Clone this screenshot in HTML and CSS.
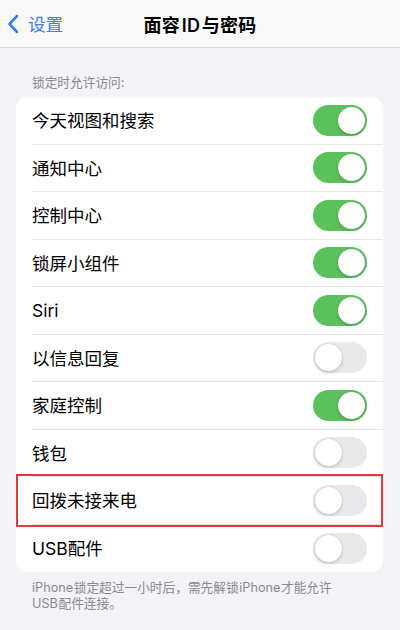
FILE: index.html
```html
<!DOCTYPE html>
<html lang="zh-CN">
<head>
<meta charset="utf-8">
<title>面容ID与密码</title>
<link rel="stylesheet" href="styles.css">
</head>
<body>
<div class="screen">
  <header class="navbar">
    <div class="back">
      <svg class="chevron" width="12" height="20" viewBox="0 0 12 20"><path d="M10 2 L2.5 10 L10 18" fill="none" stroke="#3a7ff2" stroke-width="2.6" stroke-linecap="round" stroke-linejoin="round"/></svg>
      <span>设置</span>
    </div>
    <h1 class="title">面容 ID 与密码</h1>
  </header>

  <div class="section-label">锁定时允许访问:</div>

  <div class="card">
    <div class="row"><div class="row-inner"><span class="label">今天视图和搜索</span><span class="toggle on"></span></div></div>
    <div class="row"><div class="row-inner"><span class="label">通知中心</span><span class="toggle on"></span></div></div>
    <div class="row"><div class="row-inner"><span class="label">控制中心</span><span class="toggle on"></span></div></div>
    <div class="row"><div class="row-inner"><span class="label">锁屏小组件</span><span class="toggle on"></span></div></div>
    <div class="row"><div class="row-inner"><span class="label">Siri</span><span class="toggle on"></span></div></div>
    <div class="row"><div class="row-inner"><span class="label">以信息回复</span><span class="toggle"></span></div></div>
    <div class="row"><div class="row-inner"><span class="label">家庭控制</span><span class="toggle on"></span></div></div>
    <div class="row"><div class="row-inner"><span class="label">钱包</span><span class="toggle"></span></div></div>
    <div class="row highlight"><div class="row-inner"><span class="label">回拨未接来电</span><span class="toggle"></span></div></div>
    <div class="row last"><div class="row-inner"><span class="label">USB配件</span><span class="toggle"></span></div></div>
  </div>

  <p class="footer">iPhone 锁定超过一小时后，需先解锁 iPhone 才能允许 USB 配件连接。</p>
</div>
</body>
</html>
```

FILE: styles.css
```css
html, body {
  margin: 0;
  padding: 0;
  background: #f2f2f7;
}

.screen {
  width: 400px;
  height: 630px;
  overflow: hidden;
  font-family: "Inter", "Noto Sans CJK SC", sans-serif;
  color: #000;
}

.navbar {
  position: relative;
  height: 47px;
  background: #f8f8f9;
  border-bottom: 1px solid #dcdce0;
  display: flex;
  align-items: center;
  justify-content: center;
}

.back {
  position: absolute;
  left: 7px;
  top: 0;
  height: 47px;
  display: flex;
  align-items: center;
  gap: 9px;
  color: #3a7ff2;
  font-size: 17.5px;
}

.chevron {
  display: block;
  margin-top: 1px;
}

.title {
  margin: 0;
  font-size: 18px;
  font-weight: 600;
  letter-spacing: 0.2px;
  word-spacing: -3px;
}

.section-label {
  margin: 27px 0 0 32px;
  height: 22px;
  font-size: 12.7px;
  color: #8a8a8e;
  line-height: 16px;
}

.card {
  margin: 0 17px 0 16px;
  background: #fff;
  border-radius: 11px;
}

.row {
  position: relative;
  padding-left: 16px;
}

.row-inner {
  height: 47.5px;
  box-sizing: border-box;
  border-bottom: 1px solid #e4e4e7;
  display: flex;
  align-items: center;
  justify-content: space-between;
  padding-right: 16px;
}

.row.last .row-inner {
  border-bottom: none;
}

.label {
  font-size: 17.5px;
  line-height: 22px;
  padding-top: 2px;
}

.highlight::after {
  content: "";
  position: absolute;
  left: 0;
  right: 0;
  top: -3px;
  bottom: -2px;
  border: 2px solid #e0393e;
  pointer-events: none;
}

.toggle {
  position: relative;
  width: 54px;
  height: 31px;
  border-radius: 16px;
  background: #e9e9eb;
  flex: none;
}

.toggle::after {
  content: "";
  position: absolute;
  top: 2px;
  left: 2px;
  width: 27px;
  height: 27px;
  border-radius: 50%;
  background: #fff;
  box-shadow: 0 2px 4px rgba(0, 0, 0, 0.15), 0 0 1px rgba(0, 0, 0, 0.2);
}

.toggle.on {
  background: #5bc15c;
}

.toggle.on::after {
  left: 25px;
}

.footer {
  margin: 8px 48px 0 32px;
  font-size: 12.7px;
  line-height: 16px;
  color: #8a8a8e;
  word-spacing: -3px;
}
```
